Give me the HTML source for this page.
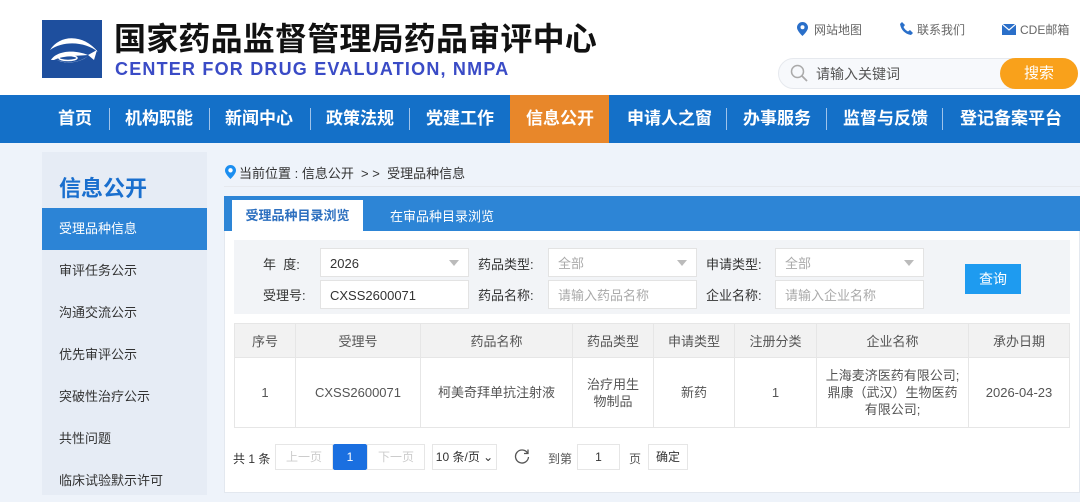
<!DOCTYPE html>
<html><head><meta charset="utf-8"><style>
*{margin:0;padding:0;box-sizing:border-box}
body{width:1080px;height:495px;overflow:hidden;background:#eef3fa;font-family:"Liberation Sans","Noto Sans CJK SC",sans-serif;position:relative;color:#333}
.a{position:absolute;white-space:nowrap}
.hdr{left:0;top:0;width:1080px;height:95px;background:#fff}
.nav{left:0;top:95px;width:1080px;height:48px;background:#1470c8}
.ni{top:95px;height:48px;line-height:48px;color:#fff;font-size:17px;font-weight:bold}
.sep{top:108px;width:1px;height:22px;background:#9fc3ea}
.side{left:42px;top:152px;width:165px;height:343px;background:#e6ecf5}
.si{left:42px;width:165px;height:42px;line-height:42px;padding-left:17px;font-size:13px;color:#333}
.box{background:#fff;border:1px solid #e3e3e3;height:29px;font-size:13px;line-height:27px;padding-left:9px}
.lbl{font-size:13px;color:#333}
.arr{position:absolute;right:9px;top:11px;width:0;height:0;border-left:5px solid transparent;border-right:5px solid transparent;border-top:6px solid #bbb}
table{border-collapse:collapse;font-size:13px;color:#555}
td{border:1px solid #e6e6e6;text-align:center}
.pg{top:444px;height:26px;line-height:24px;border:1px solid #e6e6e6;background:#fff;font-size:12px;text-align:center;color:#ccc}
</style></head><body>
<div class="a hdr"></div>
<div class="a" style="left:42px;top:20px;width:60px;height:58px;background:#1e4f9e;overflow:hidden">
<svg width="60" height="58" viewBox="0 0 60 58"><path d="M8 30 C18 14 42 14 56 32 C44 22 22 20 8 30Z" fill="#fff"/><path d="M9 40 C14 31 32 29 46 35 C38 36 22 35 12 40Z" fill="#fff"/><path d="M12 38 C20 44 36 44 46 36 C40 42 22 46 12 38Z" fill="#dfe8f6"/><path d="M46 35 L55 30 L52 40Z" fill="#fff"/><ellipse cx="26" cy="38" rx="9" ry="2.5" fill="none" stroke="#fff" stroke-width="1.5"/></svg></div>
<div class="a" style="left:114px;top:14px;font-size:32px;font-weight:bold;color:#111;letter-spacing:0.2px">国家药品监督管理局药品审评中心</div>
<div class="a" style="left:115px;top:59px;font-size:18px;font-weight:bold;color:#3a4bc6;letter-spacing:1.2px">CENTER FOR DRUG EVALUATION, NMPA</div>
<svg class="a" style="left:797px;top:22px" width="11" height="14" viewBox="0 0 11 14"><path d="M5.5 0A5.5 5.5 0 0 0 0 5.5C0 9 5.5 14 5.5 14S11 9 11 5.5A5.5 5.5 0 0 0 5.5 0Z" fill="#2a6fc9"/><circle cx="5.5" cy="5.3" r="2" fill="#fff"/></svg>
<div class="a" style="left:814px;top:21px;font-size:12px;color:#666">网站地图</div>
<svg class="a" style="left:900px;top:22px" width="13" height="13" viewBox="0 0 13 13"><path d="M2 0L5 3L3.5 5C4.5 7 6 8.5 8 9.5L10 8L13 11L11 13C5 12 1 8 0 2Z" fill="#2a6fc9"/></svg>
<div class="a" style="left:917px;top:21px;font-size:12px;color:#666">联系我们</div>
<svg class="a" style="left:1002px;top:24px" width="14" height="11" viewBox="0 0 14 11"><rect width="14" height="11" fill="#2a6fc9"/><path d="M0 0L7 6L14 0" fill="none" stroke="#fff" stroke-width="1.2"/></svg>
<div class="a" style="left:1020px;top:21px;font-size:12px;color:#666">CDE邮箱</div>
<div class="a" style="left:778px;top:58px;width:300px;height:31px;border:1px solid #e6e9ee;border-radius:16px;background:#f7f9fc"></div>
<svg class="a" style="left:790px;top:64px" width="18" height="18" viewBox="0 0 18 18"><circle cx="7.5" cy="7.5" r="6" fill="none" stroke="#aaa" stroke-width="1.5"/><path d="M12 12L17 17" stroke="#aaa" stroke-width="1.8"/></svg>
<div class="a" style="left:816px;top:64px;font-size:14px;color:#555">请输入关键词</div>
<div class="a" style="left:1000px;top:58px;width:78px;height:31px;border-radius:16px;background:#f9a11b;color:#fff;font-size:15px;text-align:center;line-height:31px">搜索</div>

<div class="a nav"></div>
<div class="a" style="left:510px;top:95px;width:99px;height:48px;background:#e8872a"></div>
<div class="a ni" style="left:58px">首页</div><div class="a sep" style="left:109px"></div>
<div class="a ni" style="left:125px">机构职能</div><div class="a sep" style="left:209px"></div>
<div class="a ni" style="left:225px">新闻中心</div><div class="a sep" style="left:310px"></div>
<div class="a ni" style="left:326px">政策法规</div><div class="a sep" style="left:409px"></div>
<div class="a ni" style="left:426px">党建工作</div>
<div class="a ni" style="left:526px">信息公开</div>
<div class="a ni" style="left:627px">申请人之窗</div><div class="a sep" style="left:726px"></div>
<div class="a ni" style="left:743px">办事服务</div><div class="a sep" style="left:826px"></div>
<div class="a ni" style="left:843px">监督与反馈</div><div class="a sep" style="left:942px"></div>
<div class="a ni" style="left:960px">登记备案平台</div>

<div class="a side"></div>
<div class="a" style="left:59px;top:171px;font-size:22px;font-weight:bold;color:#1a6fce">信息公开</div>
<div class="a si" style="top:208px;background:#2c84d6;color:#fff">受理品种信息</div>
<div class="a si" style="top:250px">审评任务公示</div>
<div class="a si" style="top:292px">沟通交流公示</div>
<div class="a si" style="top:334px">优先审评公示</div>
<div class="a si" style="top:376px">突破性治疗公示</div>
<div class="a si" style="top:418px">共性问题</div>
<div class="a si" style="top:460px">临床试验默示许可</div>

<svg class="a" style="left:225px;top:165px" width="11" height="14" viewBox="0 0 11 14"><path d="M5.5 0A5.5 5.5 0 0 0 0 5.5C0 9 5.5 14 5.5 14S11 9 11 5.5A5.5 5.5 0 0 0 5.5 0Z" fill="#1b8ef0"/><circle cx="5.5" cy="5.3" r="2.2" fill="#fff"/></svg>
<div class="a" style="left:239px;top:163px;font-size:13px;color:#333">当前位置 : 信息公开 &nbsp;&gt; &gt;&nbsp; 受理品种信息</div>
<div class="a" style="left:224px;top:186px;width:856px;height:1px;background:#e6e9ee"></div>

<div class="a" style="left:224px;top:196px;width:856px;height:297px;background:#fff;border:1px solid #e3e8ef"></div>
<div class="a" style="left:224px;top:196px;width:856px;height:35px;background:#2d85d6"></div>
<div class="a" style="left:232px;top:200px;width:131px;height:31px;background:#fff;color:#2c6fbf;font-size:13px;font-weight:bold;text-align:center;line-height:31px">受理品种目录浏览</div>
<div class="a" style="left:390px;top:206px;font-size:13px;color:#fff">在审品种目录浏览</div>

<div class="a" style="left:234px;top:240px;width:836px;height:74px;background:#f2f4f7"></div>
<div class="a lbl" style="left:263px;top:254px">年&nbsp;&nbsp;度:</div>
<div class="a lbl" style="left:263px;top:285px">受理号:</div>
<div class="a lbl" style="left:478px;top:254px">药品类型:</div>
<div class="a lbl" style="left:478px;top:285px">药品名称:</div>
<div class="a lbl" style="left:706px;top:254px">申请类型:</div>
<div class="a lbl" style="left:706px;top:285px">企业名称:</div>
<div class="a box" style="left:320px;top:248px;width:149px;line-height:29px">2026<span class="arr"></span></div>
<div class="a box" style="left:320px;top:280px;width:149px;line-height:29px">CXSS2600071</div>
<div class="a box" style="left:548px;top:248px;width:149px;color:#aaa;line-height:29px">全部<span class="arr"></span></div>
<div class="a box" style="left:548px;top:280px;width:149px;color:#aaa;line-height:29px">请输入药品名称</div>
<div class="a box" style="left:775px;top:248px;width:149px;color:#aaa;line-height:29px">全部<span class="arr"></span></div>
<div class="a box" style="left:775px;top:280px;width:149px;color:#aaa;line-height:29px">请输入企业名称</div>
<div class="a" style="left:965px;top:264px;width:56px;height:30px;background:#1e9bf0;color:#fff;font-size:14px;text-align:center;line-height:30px">查询</div>

<table class="a" style="left:234px;top:323px;width:836px">
<tr style="height:34px;background:#f2f2f2"><td style="width:61px">序号</td><td style="width:125px">受理号</td><td style="width:152px">药品名称</td><td style="width:81px">药品类型</td><td style="width:81px">申请类型</td><td style="width:82px">注册分类</td><td style="width:152px">企业名称</td><td>承办日期</td></tr>
<tr style="height:70px;line-height:17px"><td>1</td><td>CXSS2600071</td><td>柯美奇拜单抗注射液</td><td>治疗用生<br>物制品</td><td>新药</td><td>1</td><td>上海麦济医药有限公司;<br>鼎康（武汉）生物医药<br>有限公司;</td><td>2026-04-23</td></tr>
</table>

<div class="a" style="left:233px;top:450px;font-size:12px;color:#333">共 1 条</div>
<div class="a pg" style="left:275px;width:58px">上一页</div>
<div class="a pg" style="left:333px;width:34px;background:#1a6fe0;border-color:#1a6fe0;color:#fff;border-radius:2px">1</div>
<div class="a pg" style="left:367px;width:58px">下一页</div>
<div class="a pg" style="left:432px;width:65px;color:#333">10 条/页 ⌄</div>
<svg class="a" style="left:514px;top:448px" width="16" height="16" viewBox="0 0 16 16"><path d="M13.5 5A6.5 6.5 0 1 0 14.5 9" fill="none" stroke="#555" stroke-width="1.3"/><path d="M14 1.5L14 5.5L10 5.5" fill="none" stroke="#555" stroke-width="1.3"/></svg>
<div class="a" style="left:548px;top:450px;font-size:12px;color:#555">到第</div>
<div class="a pg" style="left:577px;width:43px;color:#333">1</div>
<div class="a" style="left:629px;top:450px;font-size:12px;color:#555">页</div>
<div class="a pg" style="left:648px;width:40px;color:#333">确定</div>
</body></html>
